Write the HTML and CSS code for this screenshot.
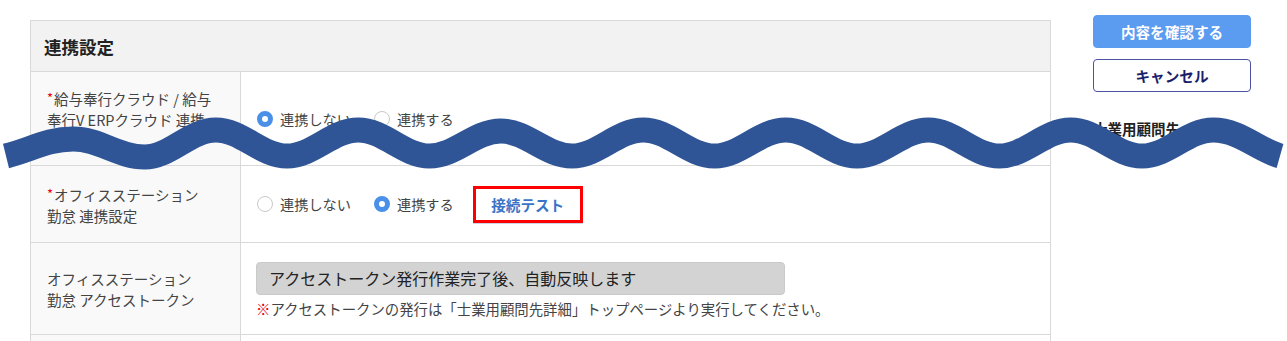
FILE: index.html
```html
<!DOCTYPE html>
<html lang="ja">
<head>
<meta charset="utf-8">
<title>連携設定</title>
<link rel="stylesheet" href="styles.css">
</head>
<body>
<div class="page">
  <section class="panel">
    <div class="panel-head">連携設定</div>
    <div class="row row-1">
      <div class="label"><div class="label-text"><span class="req">*</span>給与奉行クラウド / 給与<br>奉行V ERPクラウド 連携<br>設定</div></div>
      <div class="field">
        <label class="radio"><span class="dot checked"></span>連携しない</label>
        <label class="radio"><span class="dot"></span>連携する</label>
      </div>
    </div>
    <div class="row row-2">
      <div class="label"><div class="label-text"><span class="req">*</span>オフィスステーション<br>勤怠 連携設定</div></div>
      <div class="field">
        <label class="radio"><span class="dot"></span>連携しない</label>
        <label class="radio"><span class="dot checked"></span>連携する</label>
        <button class="test-btn">接続テスト</button>
      </div>
    </div>
    <div class="row row-3">
      <div class="label"><div class="label-text">オフィスステーション<br>勤怠 アクセストークン</div></div>
      <div class="field field-col">
        <div class="token-box">アクセストークン発行作業完了後、自動反映します</div>
        <p class="note"><span class="mark">※</span>アクセストークンの発行は「士業用顧問先詳細」トップページより実行してください。</p>
      </div>
    </div>
    <div class="row row-4">
      <div class="label"></div>
      <div class="field"></div>
    </div>
  </section>
  <aside class="side">
    <button class="btn-primary">内容を確認する</button>
    <button class="btn-outline">キャンセル</button>
    <div class="side-title">士業用顧問先</div>
  </aside>
</div>
<svg class="wave" viewBox="0 0 1287 341" width="1287" height="341" aria-hidden="true">
  <path d="M6 156 C30 150 47.35 139 73.25 139 S118.6 157 144.5 157 S189.85 130 215.75 130 S261.1 156 287 156 S332.35 130 358.25 130 S403.6 156 429.5 156 S474.85 131 500.75 131 S546.1 156 572 156 S617.35 130 643.25 130 S688.6 156 714.5 156 S759.85 130 785.75 130 S831.1 156 857 156 S902.35 130 928.25 130 S973.6 156 999.5 156 S1044.85 130 1070.75 130 S1116.1 156 1142 156 S1187.35 130 1213.25 130 S1258.6 150 1280 156" fill="none" stroke="#2f5596" stroke-width="25" stroke-linecap="butt"/>
</svg>
</body>
</html>
```
FILE: styles.css
```css
html, body {
  margin: 0;
  padding: 0;
  background: #fff;
}
body {
  width: 1287px;
  height: 341px;
  overflow: hidden;
  position: relative;
  font-family: "Noto Sans CJK JP", "Noto Sans", sans-serif;
  color: #444;
}
.page {
  display: flex;
  align-items: flex-start;
  gap: 42px;
  padding: 15px 0 0 30px;
}
.panel {
  width: 1021px;
  box-sizing: border-box;
  margin-top: 5px;
  border: 1px solid #d9d9d9;
  border-bottom: none;
  flex: none;
}
.panel-head {
  height: 50px;
  display: flex;
  align-items: center;
  padding-left: 13px;
  background: #f2f2f2;
  font-size: 17.5px;
  font-weight: 700;
  color: #222;
  border-bottom: 1px solid #d9d9d9;
}
.row {
  display: grid;
  grid-template-columns: 210px 1fr;
  border-bottom: 1px solid #d9d9d9;
}
.row-1 { height: 93px; }
.row-2 { height: 76px; }
.row-3 { height: 91px; }
.row-4 { height: 60px; }
.label {
  background: #f9f9f9;
  border-right: 1px solid #d9d9d9;
  padding-left: 16px;
  display: flex;
  align-items: center;
}
.label-text {
  font-size: 14.5px;
  line-height: 21px;
  color: #444;
}
.req {
  color: #e60012;
  font-size: 13px;
  vertical-align: 2px;
  margin-right: 1px;
}
.field {
  display: flex;
  align-items: center;
  padding-left: 16px;
  font-size: 14.2px;
  color: #444;
}
.field-col {
  flex-direction: column;
  align-items: flex-start;
  justify-content: center;
  padding-left: 15px;
  padding-top: 2px;
}
.radio {
  display: inline-flex;
  align-items: center;
  gap: 7px;
  margin-right: 23px;
}
.dot {
  width: 16px;
  height: 16px;
  box-sizing: border-box;
  border-radius: 50%;
  border: 1px solid #c8c8c8;
  background: #fff;
  display: inline-block;
  flex: none;
}
.dot.checked {
  border: 5px solid #4a8fe8;
  background: #fff;
}
.test-btn {
  margin-left: -4px;
  width: 110px;
  height: 37px;
  box-sizing: border-box;
  border: 3px solid #ff0000;
  background: #fff;
  color: #3a74c6;
  font-family: inherit;
  font-size: 14.6px;
  font-weight: 700;
  padding: 0;
  box-shadow: 0 1px 0 #c9d4e6;
}
.token-box {
  width: 529px;
  height: 33px;
  box-sizing: border-box;
  background: #d3d3d3;
  border: 1px solid #cacaca;
  border-radius: 4px;
  padding-left: 12px;
  display: flex;
  align-items: center;
  font-size: 16px;
  color: #222;
}
.note {
  margin: 5px 0 0;
  font-size: 14.4px;
  line-height: 18px;
  color: #444;
}
.mark {
  color: #e60012;
  font-weight: 700;
}
.side {
  display: flex;
  flex-direction: column;
  width: 158px;
  flex: none;
}
.btn-primary,
.btn-outline {
  width: 158px;
  height: 33px;
  box-sizing: border-box;
  border-radius: 4px;
  font-family: inherit;
  font-size: 14.6px;
  font-weight: 700;
  padding: 0;
}
.btn-primary {
  background: #5b9bf0;
  border: 1px solid #5b9bf0;
  color: #fff;
}
.btn-outline {
  margin-top: 11px;
  background: #fff;
  border: 1px solid #4d50a3;
  color: #1b1f6b;
}
.side-title {
  margin-top: 27px;
  font-size: 14.5px;
  font-weight: 700;
  color: #222;
  line-height: 20px;
}
.wave {
  position: absolute;
  left: 0;
  top: 0;
  pointer-events: none;
}
```
